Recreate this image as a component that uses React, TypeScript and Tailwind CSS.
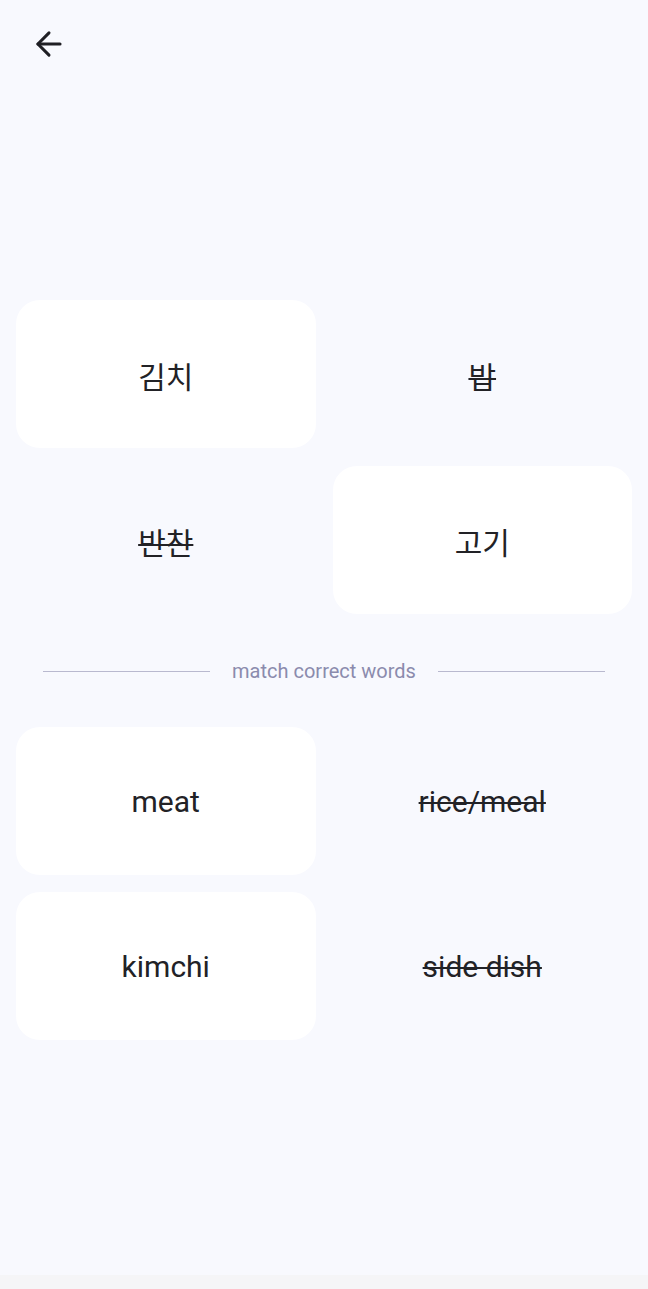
import { ArrowLeft } from 'lucide-react';

type Word = { text: string; done?: boolean; card?: boolean };

const korean: Word[] = [
  { text: '김치', card: true },
  { text: '밥', done: true },
  { text: '반찬', done: true },
  { text: '고기', card: true },
];

const english: Word[] = [
  { text: 'meat', card: true },
  { text: 'rice/meal', done: true },
  { text: 'kimchi', card: true },
  { text: 'side dish', done: true },
];

function Tile({ word, nudge }: { word: Word; nudge?: string }) {
  return (
    <div
      className={
        'h-[148px] rounded-[24px] flex items-center justify-center text-[30px] text-[#222226] ' +
        (word.card ? 'bg-white' : 'bg-transparent')
      }
    >
      <span className={(word.done ? 'line-through decoration-2 ' : '') + (nudge ?? '')}>{word.text}</span>
    </div>
  );
}

export default function App() {
  return (
    <div
      className="min-h-[1289px] bg-[#f8f9fe] flex flex-col"
      style={{ fontFamily: 'Roboto, "Noto Sans CJK KR", sans-serif' }}
    >
      <div className="pl-[30px] pt-[25px]">
        <ArrowLeft size={38} strokeWidth={1.9} className="text-[#1f1f24]" />
      </div>

      <div className="px-4 pt-[237px]">
        <div className="grid grid-cols-2 gap-x-[17px] gap-y-[18px]">
          {korean.map((w) => (
            <Tile key={w.text} word={w} nudge="pt-[6px]" />
          ))}
        </div>

        <div className="flex items-center gap-[22px] px-[27px] pt-[43px] pb-[42px]">
          <div className="flex-1 h-px bg-[#b9b9cf]" />
          <span className="text-[20px] leading-[28px] text-[#8b8bad]">match correct words</span>
          <div className="flex-1 h-px bg-[#b9b9cf]" />
        </div>

        <div className="grid grid-cols-2 gap-x-[17px] gap-y-[17px]">
          {english.map((w) => (
            <Tile key={w.text} word={w} />
          ))}
        </div>
      </div>

      <div className="flex-1" />
      <div className="h-[14px] bg-[#f5f5f7]" />
    </div>
  );
}
